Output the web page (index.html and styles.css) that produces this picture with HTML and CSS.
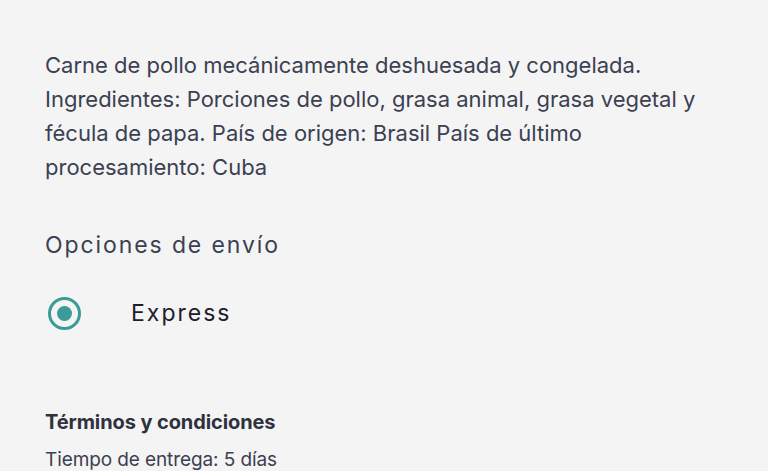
FILE: index.html
```html
<!DOCTYPE html>
<html lang="es">
<head>
<meta charset="utf-8">
<link rel="stylesheet" href="styles.css">
</head>
<body>
<main class="page">
  <p class="desc">Carne de pollo mecánicamente deshuesada y congelada. Ingredientes: Porciones de pollo, grasa animal, grasa vegetal y fécula de papa. País de origen: Brasil País de último procesamiento: Cuba</p>
  <h2 class="section-title">Opciones de envío</h2>
  <label class="option">
    <span class="radio"><span class="dot"></span></span>
    <span class="option-label">Express</span>
  </label>
  <h3 class="terms-title">Términos y condiciones</h3>
  <p class="terms-text">Tiempo de entrega: 5 días</p>
</main>
</body>
</html>
```

FILE: styles.css
```css
html, body {
  margin: 0;
  padding: 0;
  background: #f4f4f5;
}
body {
  font-family: Inter, "Noto Sans", sans-serif;
  color: #3b4150;
  width: 768px;
  height: 471px;
  overflow: hidden;
}
.page {
  padding: 48px 45px 0 45px;
  display: flex;
  flex-direction: column;
}
.desc {
  margin: 0;
  font-size: 22px;
  line-height: 34px;
  width: 680px;
  letter-spacing: 0;
}
.section-title {
  margin: 46px 0 0 0;
  font-weight: 400;
  font-size: 23px;
  line-height: 30px;
  letter-spacing: 1.9px;
  color: #3b4150;
}
.option {
  margin-top: 36px;
  display: flex;
  align-items: center;
  height: 34px;
}
.radio {
  box-sizing: border-box;
  width: 33px;
  height: 33px;
  margin-left: 3px;
  border: 3.5px solid #3a9b97;
  border-radius: 50%;
  display: flex;
  align-items: center;
  justify-content: center;
}
.dot {
  width: 15px;
  height: 15px;
  border-radius: 50%;
  background: #3a9b97;
}
.option-label {
  margin-left: 50px;
  font-size: 23px;
  letter-spacing: 2px;
  color: #1d202b;
}
.terms-title {
  margin: 79px 0 0 0;
  font-size: 20px;
  line-height: 26px;
  font-weight: 700;
  color: #2e323d;
  letter-spacing: -0.1px;
}
.terms-text {
  margin: 12px 0 0 0;
  font-size: 19px;
  line-height: 26px;
  letter-spacing: -0.1px;
  color: #3b4150;
}
```
